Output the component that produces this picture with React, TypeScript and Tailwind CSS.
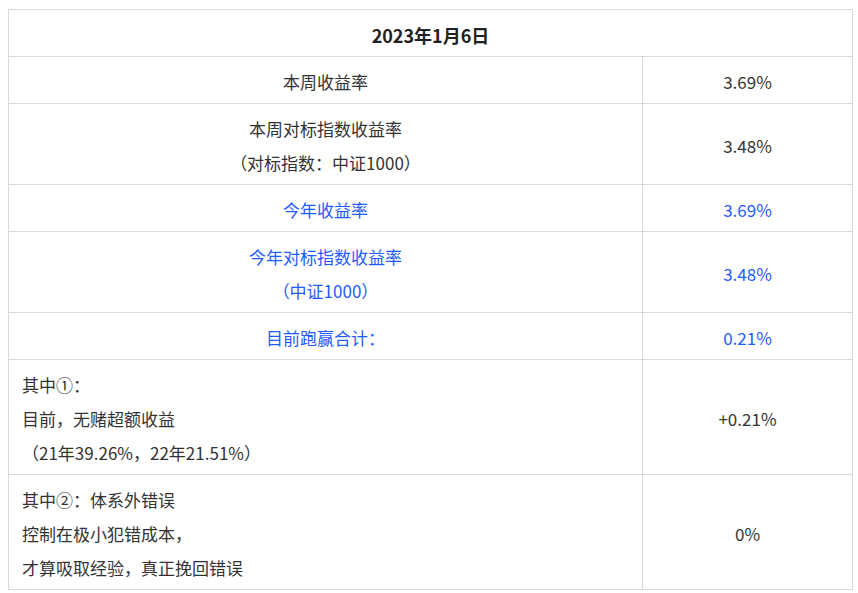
import React from 'react';

type Row = {
    left: string[];
    right: string;
    blue?: boolean;
    alignLeft?: boolean;
};

const rows: Row[] = [
    { left: ['本周收益率'], right: '3.69%' },
    { left: ['本周对标指数收益率', '（对标指数：中证1000）'], right: '3.48%' },
    { left: ['今年收益率'], right: '3.69%', blue: true },
    { left: ['今年对标指数收益率', '（中证1000）'], right: '3.48%', blue: true },
    { left: ['目前跑赢合计：'], right: '0.21%', blue: true },
    { left: ['其中①：', '目前，无赌超额收益', '（21年39.26%，22年21.51%）'], right: '+0.21%', alignLeft: true },
    { left: ['其中②：体系外错误', '控制在极小犯错成本，', '才算吸取经验，真正挽回错误'], right: '0%', alignLeft: true },
];

export default function App() {
    return (
        <div className="w-[858px] h-[593px] bg-white pl-2 pt-[9px] font-['Microsoft_YaHei','Noto_Sans_CJK_SC',sans-serif] text-[17px] text-[#333]">
            <table className="w-[845px] border-collapse table-fixed">
                <colgroup>
                    <col className="w-[634px]" />
                    <col />
                </colgroup>
                <tbody>
                    <tr>
                        <td colSpan={2} className="border border-[#d9d9d9] pt-[8px] pb-[4px] text-center text-[18px] font-bold leading-[34px] text-[#222]">
                            2023年1月6日
                        </td>
                    </tr>
                    {rows.map((r, i) => (
                        <tr key={i} className={r.blue ? 'text-[#1f5cff]' : ''}>
                            <td className={`border border-[#d9d9d9] pt-[8px] pb-[4px] px-[13px] leading-[34px] ${r.alignLeft ? 'text-left' : 'text-center'}`}>
                                {r.left.map((t, j) => (
                                    <div key={j}>{t}</div>
                                ))}
                            </td>
                            <td className="border border-[#d9d9d9] pt-[8px] pb-[4px] text-center leading-[34px] align-middle">
                                {r.right}
                            </td>
                        </tr>
                    ))}
                </tbody>
            </table>
        </div>
    );
}
